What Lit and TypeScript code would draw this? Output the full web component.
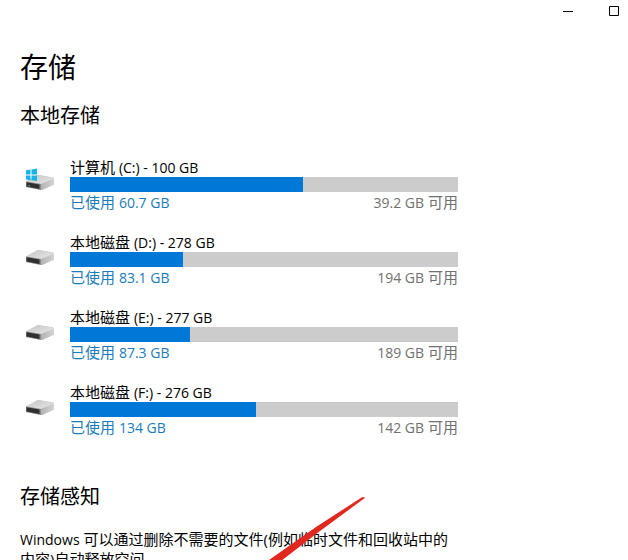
import { LitElement, html, svg, css } from "lit";
import { customElement, property } from "lit/decorators.js";

interface Drive {
  name: string;
  letter: string;
  total: string;
  used: string;
  free: string;
  percent: number;
  system?: boolean;
}

const DRIVES: Drive[] = [
  { name: "计算机", letter: "(C:)", total: "100 GB", used: "60.7 GB", free: "39.2 GB", percent: 60, system: true },
  { name: "本地磁盘", letter: "(D:)", total: "278 GB", used: "83.1 GB", free: "194 GB", percent: 29 },
  { name: "本地磁盘", letter: "(E:)", total: "277 GB", used: "87.3 GB", free: "189 GB", percent: 31 },
  { name: "本地磁盘", letter: "(F:)", total: "276 GB", used: "134 GB", free: "142 GB", percent: 48 },
];

@customElement("drive-row")
export class DriveRow extends LitElement {
  @property({ attribute: false }) drive!: Drive;

  static styles = css`
    :host {
      display: flex;
      line-height: 20px;
    }
    .icon {
      flex: none;
      width: 50px;
      height: 40px;
    }
    .info {
      flex: 1;
      min-width: 0;
    }
    .latin {
      font-size: 14px;
      line-height: 1;
    }
    .bar {
      height: 15px;
      background: #cccccc;
    }
    .fill {
      height: 100%;
      background: #0078d7;
    }
    .amounts {
      display: flex;
      justify-content: space-between;
    }
    .used {
      color: #1a7cbc;
    }
    .free {
      color: #707070;
    }
  `;

  render() {
    const d = this.drive;
    return html`
      <svg class="icon" viewBox="0 0 50 40" aria-hidden="true">
        <defs>
          <linearGradient id="top" x1="0" y1="0" x2="1" y2="1">
            <stop offset="0" stop-color="#c4c4c4" />
            <stop offset="1" stop-color="#e8e8e8" />
          </linearGradient>
          <linearGradient id="side" x1="0" y1="0" x2="1" y2="0">
            <stop offset="0" stop-color="#b0b0b0" />
            <stop offset="1" stop-color="#d4d4d4" />
          </linearGradient>
        </defs>
        <path d="M6 24.5 L18 18 L33 20.5 L34 22 V27.5 L22 33 L6 30Z" fill="#bdbdbd" />
        <path d="M6 24.5 L18 18 L33 20.5 L34 22 L21 27Z" fill="url(#top)" />
        <path d="M21 27 L34 22 V27.5 L22 33 L20 32.6Z" fill="url(#side)" />
        <path d="M6 24.5 L21 27 V33 L6 30Z" fill="#8c8c8c" />
        <path d="M6.5 25.3 L19.5 27.6 V32 L6.5 29.5Z" fill="#303030" />
        ${d.system
          ? svg`
            <path d="M8 28 L10 28.4 V29.4 L8 29Z" fill="#3f9e4a" />
            <path d="M6 13.2 L10.5 12.6 V17.4 H6Z M11.5 12.4 L17 11.6 V17.4 H11.5Z M6 18.4 H10.5 V23.2 L6 22.6Z M11.5 18.4 H17 V24 L11.5 23.3Z" fill="#18b4e8" />`
          : null}
      </svg>
      <div class="info">
        <div>${d.name} <span class="latin">${d.letter} - ${d.total}</span></div>
        <div class="bar" role="meter" aria-label=${`${d.name} ${d.letter}`} aria-valuemin="0" aria-valuemax="100" aria-valuenow=${d.percent}>
          <div class="fill" style="width:${d.percent}%"></div>
        </div>
        <div class="amounts">
          <span class="used">已使用 <span class="latin">${d.used}</span></span>
          <span class="free"><span class="latin">${d.free}</span> 可用</span>
        </div>
      </div>
    `;
  }
}

@customElement("app-root")
export class AppRoot extends LitElement {
  static styles = css`
    :host {
      display: block;
      height: 100vh;
      overflow: hidden;
      background: #ffffff;
      color: #000000;
      font: 15px/20px "Open Sans", "Noto Sans CJK SC", sans-serif;
    }
    .titlebar {
      display: flex;
      justify-content: flex-end;
      gap: 18px;
      height: 22px;
    }
    .control {
      display: grid;
      place-items: center;
      width: 28px;
      padding: 0;
      border: 0;
      background: none;
      color: inherit;
    }
    .glyph {
      width: 10px;
      height: 10px;
      fill: none;
      stroke: currentColor;
    }
    main {
      max-width: 438px;
      padding: 25px 20px 0;
    }
    h1,
    h2,
    p {
      margin: 0;
      font-weight: 400;
    }
    h1 {
      font-size: 28px;
      line-height: 40px;
    }
    h2 {
      font-size: 20px;
      line-height: 28px;
    }
    .local {
      margin-top: 15px;
    }
    .drives {
      display: grid;
      gap: 20px;
      margin: 27px 0 0;
      padding: 0;
      list-style: none;
    }
    .sense {
      position: relative;
      margin-top: 46px;
    }
    .sense p {
      margin-top: 18px;
    }
    .latin {
      font-size: 14px;
      line-height: 1;
    }
    .arrow {
      position: absolute;
      top: 0;
      left: 220px;
      width: 140px;
      height: 100px;
      pointer-events: none;
    }
  `;

  render() {
    return html`
      <header class="titlebar">
        <button class="control" aria-label="最小化">
          <svg class="glyph" viewBox="0 0 10 10"><path d="M0 5.5H10" /></svg>
        </button>
        <button class="control" aria-label="最大化">
          <svg class="glyph" viewBox="0 0 10 10"><path d="M.5 .5H9.5V9.5H.5Z" /></svg>
        </button>
      </header>
      <main>
        <h1>存储</h1>
        <h2 class="local">本地存储</h2>
        <ul class="drives">
          ${DRIVES.map((d) => html`<li><drive-row .drive=${d}></drive-row></li>`)}
        </ul>
        <section class="sense">
          <h2>存储感知</h2>
          <p><span class="latin">Windows</span> 可以通过删除不需要的文件(例如临时文件和回收站中的内容)自动释放空间。</p>
          <svg class="arrow" viewBox="0 0 140 100" aria-hidden="true">
            <path d="M124.5 14 L122 14.2 L76 44 L29 77 L15 88 L27 88 L41 78 L80 48 L124.5 15.2Z" fill="#e0281f" />
          </svg>
        </section>
      </main>
    `;
  }
}
